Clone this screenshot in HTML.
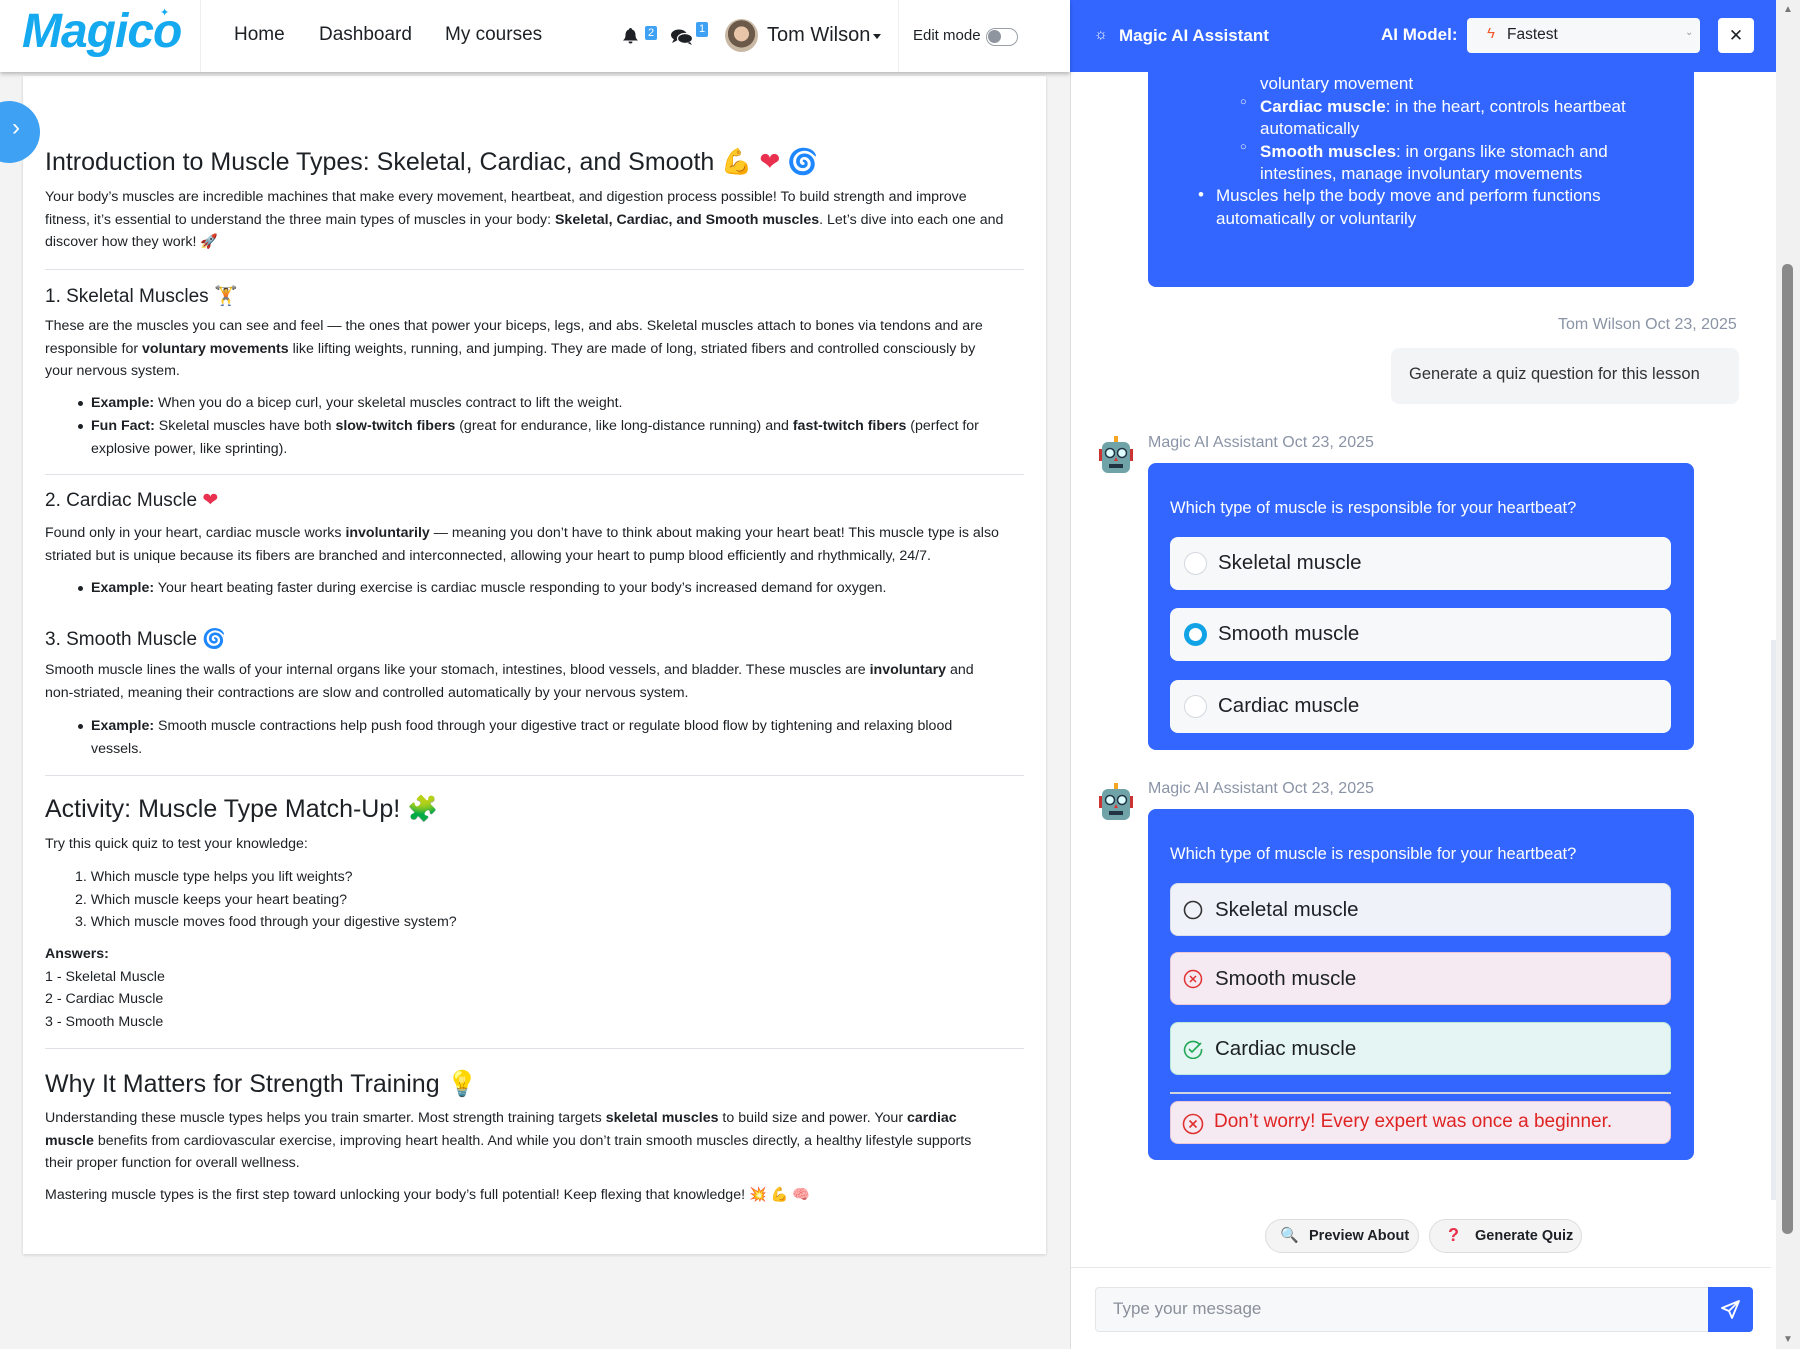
<!DOCTYPE html>
<html><head><meta charset="utf-8"><style>
*{box-sizing:border-box;margin:0;padding:0}
body{width:1800px;height:1349px;overflow:hidden;background:#f3f3f3;font-family:"Liberation Sans",sans-serif;position:relative;color:#1d2125}
.a{position:absolute;white-space:nowrap}
#hdr{position:absolute;left:0;top:0;width:1070px;height:72px;background:#fff;box-shadow:0 2px 4px rgba(0,0,0,.25);z-index:5}
.nav{position:absolute;top:24px;font-size:19px;color:#1d2125}
#card{position:absolute;left:23px;top:76px;width:1023px;height:1178px;background:#fff;box-shadow:0 1px 3px rgba(0,0,0,.15)}
.t{position:absolute;left:45px;font-size:14.2px;line-height:22.6px;color:#1d2125;white-space:nowrap}
.h2{position:absolute;left:45px;font-size:25px;color:#1d2125;white-space:nowrap}
.h3{position:absolute;left:45px;font-size:19px;color:#1d2125;white-space:nowrap}
.hr{position:absolute;left:45px;width:979px;height:1px;background:#dee2e6}
.li{position:absolute;left:91px;font-size:14.2px;line-height:22.6px;white-space:nowrap}
.li:before{content:"";position:absolute;left:-13px;top:9px;width:5px;height:5px;border-radius:50%;background:#1d2125}
.ol{position:absolute;left:75px;font-size:14.2px;line-height:22.6px;white-space:nowrap}
#rp{position:absolute;left:1070px;top:0;width:706px;height:1349px;background:#fff;border-left:1px solid #ddd}
#rh{position:absolute;left:1070px;top:0;width:706px;height:72px;background:#3366ff;z-index:4}
.bub{position:absolute;left:1148px;width:546px;background:#3366ff;border-radius:8px}
.wt{position:absolute;color:#fff;font-size:17px;white-space:nowrap}
.meta{position:absolute;font-size:16px;color:#8a94a6;white-space:nowrap}
.opt{position:absolute;left:1170px;width:501px;height:53px;background:#f7f8fa;border-radius:8px;font-size:20.5px;color:#1d2125}
.opt span{position:absolute;left:48px;top:14px}
.rad{position:absolute;left:14px;top:15px;width:23px;height:23px;border-radius:50%;border:1.5px solid #d4d7dd;background:#fff}
.robot{position:absolute;width:42px;height:42px}
.btn{position:absolute;top:1219px;height:34px;background:#f4f4f4;border:1px solid #ddd;border-radius:17px;font-size:14.5px;font-weight:bold;color:#1d2125}
</style></head><body>
<div id="hdr">
 <div class="a" style="left:22px;top:4px;font-size:48px;font-weight:bold;font-style:italic;color:#15a9f0;letter-spacing:-1px">Magico</div>
 <div class="a" style="left:160px;top:6px;font-size:11px;color:#15a9f0">✦</div>
 <div style="position:absolute;left:200px;top:0;width:1px;height:72px;background:#eee"></div>
 <div class="nav" style="left:234px">Home</div>
 <div class="nav" style="left:319px">Dashboard</div>
 <div class="nav" style="left:445px">My courses</div>
 <svg style="position:absolute;left:623px;top:28px" width="15" height="16" viewBox="0 0 15 16"><path d="M7.5 0c1 0 1.5.8 1.5 1.5 2.5.7 3.5 3 3.5 5.5 0 3 1 4 2.5 5.5H0C1.5 11 2.5 10 2.5 7c0-2.5 1-4.8 3.5-5.5C6 .8 6.5 0 7.5 0zM5.5 13.5h4a2 2 0 0 1-4 0z" fill="#1d2125"/></svg>
 <div class="a" style="left:645px;top:26px;width:12px;height:14px;background:#3ea1f3;color:#fff;font-size:11px;text-align:center;line-height:14px;border-radius:2px">2</div>
 <svg style="position:absolute;left:671px;top:29px" width="22" height="16" viewBox="0 0 22 16"><ellipse cx="8" cy="6" rx="8" ry="5.5" fill="#1d2125"/><path d="M3 10l-2 4 5-2.5z" fill="#1d2125"/><ellipse cx="14" cy="9.5" rx="7.5" ry="5" fill="#1d2125" stroke="#fff" stroke-width="1.2"/><path d="M19 13l2 3-4.5-2z" fill="#1d2125"/></svg>
 <div class="a" style="left:696px;top:22px;width:12px;height:15px;background:#3ea1f3;color:#fff;font-size:11px;text-align:center;line-height:15px;border-radius:2px">1</div>
 <div style="position:absolute;left:725px;top:19px;width:33px;height:33px;border-radius:50%;background:radial-gradient(circle at 50% 45%,#e8c4a8 0 30%,#6b5a4a 31% 55%,#c9b8a4 56%)"></div>
 <div class="a" style="left:767px;top:24px;font-size:20px">Tom Wilson</div>
 <div class="a" style="left:873px;top:34px;width:0;height:0;border-left:4px solid transparent;border-right:4px solid transparent;border-top:5px solid #1d2125"></div>
 <div style="position:absolute;left:898px;top:0;width:1px;height:72px;background:#eee"></div>
 <div class="a" style="left:913px;top:27px;font-size:15px">Edit mode</div>
 <div style="position:absolute;left:986px;top:28px;width:32px;height:18px;border-radius:9px;border:1.5px solid #9aa0a6;background:#fff"><div style="position:absolute;left:1px;top:1px;width:13px;height:13px;border-radius:50%;background:#8f959e"></div></div>
</div>
<div style="position:absolute;left:-22px;top:101px;width:62px;height:62px;border-radius:50%;background:#3ea1f3;z-index:6"></div>
<div class="a" style="left:12px;top:114px;color:#fff;font-size:24px;z-index:7">›</div>
<div id="card"></div>
<div class="h2" style="top:147px">Introduction to Muscle Types: Skeletal, Cardiac, and Smooth <span style="color:#f4a63a">💪</span> <span style="color:#e9304f">❤</span> <span style="color:#3b5cf0">🌀</span></div>
<div class="t" style="top:186px">Your body’s muscles are incredible machines that make every movement, heartbeat, and digestion process possible! To build strength and improve<br>fitness, it’s essential to understand the three main types of muscles in your body: <b>Skeletal, Cardiac, and Smooth muscles</b>. Let’s dive into each one and<br>discover how they work! 🚀</div>
<div class="hr" style="top:269px"></div>
<div class="h3" style="top:284px">1. Skeletal Muscles 🏋</div>
<div class="t" style="top:315px">These are the muscles you can see and feel — the ones that power your biceps, legs, and abs. Skeletal muscles attach to bones via tendons and are<br>responsible for <b>voluntary movements</b> like lifting weights, running, and jumping. They are made of long, striated fibers and controlled consciously by<br>your nervous system.</div>
<div class="li" style="top:392px"><b>Example:</b> When you do a bicep curl, your skeletal muscles contract to lift the weight.</div>
<div class="li" style="top:415px"><b>Fun Fact:</b> Skeletal muscles have both <b>slow-twitch fibers</b> (great for endurance, like long-distance running) and <b>fast-twitch fibers</b> (perfect for<br>explosive power, like sprinting).</div>
<div class="hr" style="top:474px"></div>
<div class="h3" style="top:489px">2. Cardiac Muscle <span style="color:#e9304f">❤</span></div>
<div class="t" style="top:522px">Found only in your heart, cardiac muscle works <b>involuntarily</b> — meaning you don’t have to think about making your heart beat! This muscle type is also<br>striated but is unique because its fibers are branched and interconnected, allowing your heart to pump blood efficiently and rhythmically, 24/7.</div>
<div class="li" style="top:577px"><b>Example:</b> Your heart beating faster during exercise is cardiac muscle responding to your body’s increased demand for oxygen.</div>
<div class="h3" style="top:627px">3. Smooth Muscle <span style="color:#3b5cf0">🌀</span></div>
<div class="t" style="top:659px">Smooth muscle lines the walls of your internal organs like your stomach, intestines, blood vessels, and bladder. These muscles are <b>involuntary</b> and<br>non-striated, meaning their contractions are slow and controlled automatically by your nervous system.</div>
<div class="li" style="top:715px"><b>Example:</b> Smooth muscle contractions help push food through your digestive tract or regulate blood flow by tightening and relaxing blood<br>vessels.</div>
<div class="hr" style="top:775px"></div>
<div class="h2" style="top:795px">Activity: Muscle Type Match-Up! <span style="color:#7cc35a">🧩</span></div>
<div class="t" style="top:833px">Try this quick quiz to test your knowledge:</div>
<div class="ol" style="top:866px">1. Which muscle type helps you lift weights?<br>2. Which muscle keeps your heart beating?<br>3. Which muscle moves food through your digestive system?</div>
<div class="t" style="top:943px"><b>Answers:</b><br>1 - Skeletal Muscle<br>2 - Cardiac Muscle<br>3 - Smooth Muscle</div>
<div class="hr" style="top:1048px"></div>
<div class="h2" style="top:1070px">Why It Matters for Strength Training <span style="color:#f5c431">💡</span></div>
<div class="t" style="top:1107px">Understanding these muscle types helps you train smarter. Most strength training targets <b>skeletal muscles</b> to build size and power. Your <b>cardiac</b><br><b>muscle</b> benefits from cardiovascular exercise, improving heart health. And while you don’t train smooth muscles directly, a healthy lifestyle supports<br>their proper function for overall wellness.</div>
<div class="t" style="top:1184px">Mastering muscle types is the first step toward unlocking your body’s full potential! Keep flexing that knowledge! 💥 💪 🧠</div>

<div id="rp"></div>
<div style="position:absolute;left:1776px;top:0;width:24px;height:1349px;background:#f1f1f1"></div>
<div style="position:absolute;left:1782px;top:264px;width:11px;height:970px;background:#8a8a8a;border-radius:5px"></div>
<div class="a" style="left:1783px;top:4px;font-size:10px;color:#777">▲</div>
<div class="a" style="left:1783px;top:1334px;font-size:10px;color:#777">▼</div>
<div style="position:absolute;left:1771px;top:640px;width:5px;height:560px;background:#e8ebf0"></div>

<div id="rh">
 <div class="a" style="left:24px;top:26px;font-size:15px;color:#fff">☼</div>
 <div class="a" style="left:49px;top:26px;font-size:17px;font-weight:bold;color:#fff">Magic AI Assistant</div>
 <div class="a" style="left:311px;top:25px;font-size:17px;font-weight:bold;color:#fff">AI Model:</div>
 <div style="position:absolute;left:397px;top:18px;width:233px;height:35px;background:#f7f8fa;border-radius:4px">
  <span class="a" style="left:20px;top:7px;font-size:15px;color:#f0582a">ϟ</span>
  <span class="a" style="left:40px;top:8px;font-size:15.5px;color:#1d2125">Fastest</span>
  <span class="a" style="left:218px;top:9px;font-size:10px;color:#999">⌄</span>
 </div>
 <div style="position:absolute;left:648px;top:18px;width:36px;height:35px;background:#fff;border-radius:4px;text-align:center;line-height:35px;font-size:17px;color:#1d2125">✕</div>
</div>

<div class="bub" style="top:40px;height:247px;border-radius:0 0 8px 8px"></div>
<div class="wt" style="left:1260px;top:73px;line-height:22.5px">voluntary movement<br><b>Cardiac muscle</b>: in the heart, controls heartbeat<br>automatically<br><b>Smooth muscles</b>: in organs like stomach and<br>intestines, manage involuntary movements</div>
<div class="wt" style="left:1240px;top:96px;font-size:11px">○</div>
<div class="wt" style="left:1240px;top:141px;font-size:11px">○</div>
<div class="wt" style="left:1198px;top:185px">•</div>
<div class="wt" style="left:1216px;top:185px;line-height:22.5px">Muscles help the body move and perform functions<br>automatically or voluntarily</div>

<div class="meta" style="left:1558px;top:316px">Tom Wilson Oct 23, 2025</div>
<div style="position:absolute;left:1391px;top:348px;width:348px;height:56px;background:#f3f4f6;border-radius:8px"></div>
<div class="a" style="left:1409px;top:365px;font-size:16.5px;color:#333">Generate a quiz question for this lesson</div>

<svg class="robot" style="left:1095px;top:433px" viewBox="0 0 42 42"><rect x="19" y="3" width="4" height="6" fill="#f5a623"/><rect x="4" y="16" width="4" height="12" fill="#c33"/><rect x="34" y="16" width="4" height="12" fill="#c33"/><rect x="7" y="9" width="28" height="31" rx="6" fill="#6fa3a8"/><circle cx="15" cy="20" r="4.5" fill="#dff" stroke="#234" stroke-width="1.5"/><circle cx="27" cy="20" r="4.5" fill="#dff" stroke="#234" stroke-width="1.5"/><path d="M21 24l-2 4h4z" fill="#d33"/><rect x="14" y="31" width="14" height="4" fill="#234"/></svg>
<div class="meta" style="left:1148px;top:434px">Magic AI Assistant Oct 23, 2025</div>
<div class="bub" style="top:463px;height:287px"></div>
<div class="wt" style="left:1170px;top:499px;font-size:16.5px">Which type of muscle is responsible for your heartbeat?</div>
<div class="opt" style="top:537px"><div class="rad"></div><span>Skeletal muscle</span></div>
<div class="opt" style="top:608px"><div class="rad" style="border:5px solid #12a3e6"></div><span>Smooth muscle</span></div>
<div class="opt" style="top:680px"><div class="rad"></div><span>Cardiac muscle</span></div>

<svg class="robot" style="left:1095px;top:780px" viewBox="0 0 42 42"><rect x="19" y="3" width="4" height="6" fill="#f5a623"/><rect x="4" y="16" width="4" height="12" fill="#c33"/><rect x="34" y="16" width="4" height="12" fill="#c33"/><rect x="7" y="9" width="28" height="31" rx="6" fill="#6fa3a8"/><circle cx="15" cy="20" r="4.5" fill="#dff" stroke="#234" stroke-width="1.5"/><circle cx="27" cy="20" r="4.5" fill="#dff" stroke="#234" stroke-width="1.5"/><path d="M21 24l-2 4h4z" fill="#d33"/><rect x="14" y="31" width="14" height="4" fill="#234"/></svg>
<div class="meta" style="left:1148px;top:780px">Magic AI Assistant Oct 23, 2025</div>
<div class="bub" style="top:809px;height:351px"></div>
<div class="wt" style="left:1170px;top:845px;font-size:16.5px">Which type of muscle is responsible for your heartbeat?</div>
<div class="opt" style="top:883px;background:#eff3f9;border:1px solid #d9dfe8"><svg style="position:absolute;left:12px;top:16px" width="20" height="20"><circle cx="10" cy="10" r="8.5" fill="none" stroke="#333" stroke-width="1.6"/></svg><span style="left:44px">Skeletal muscle</span></div>
<div class="opt" style="top:952px;background:#f5eaf1;border:1px solid #ecc8d6"><svg style="position:absolute;left:12px;top:16px" width="20" height="20"><circle cx="10" cy="10" r="8.5" fill="none" stroke="#e03131" stroke-width="1.5"/><path d="M7 7l6 6M13 7l-6 6" stroke="#e03131" stroke-width="1.5"/></svg><span style="left:44px">Smooth muscle</span></div>
<div class="opt" style="top:1022px;background:#e5f5f3;border:1px solid #b9ead9"><svg style="position:absolute;left:12px;top:16px" width="20" height="20"><path d="M17 6A8.5 8.5 0 1 0 18.5 10" fill="none" stroke="#22a855" stroke-width="1.6"/><path d="M6 10l3 3 9-9" fill="none" stroke="#22a855" stroke-width="1.6"/></svg><span style="left:44px">Cardiac muscle</span></div>
<div style="position:absolute;left:1170px;top:1092px;width:501px;height:2px;background:#d0d4dc"></div>
<div class="opt" style="top:1101px;height:43px;background:#f5eaf1;border:1px solid #ecc8d6"><svg style="position:absolute;left:11px;top:11px" width="22" height="22"><circle cx="11" cy="11" r="9.5" fill="none" stroke="#e03131" stroke-width="1.6"/><path d="M7.5 7.5l7 7M14.5 7.5l-7 7" stroke="#e03131" stroke-width="1.6"/></svg><span style="left:43px;top:9px;color:#e02424;font-size:19px">Don’t worry! Every expert was once a beginner.</span></div>

<div class="btn" style="left:1265px;width:154px"><span class="a" style="left:14px;top:6px;font-size:15px">🔍</span><span class="a" style="left:43px;top:8px">Preview About</span></div>
<div class="btn" style="left:1429px;width:153px"><span class="a" style="left:18px;top:5px;font-size:18px;color:#e8304a">?</span><span class="a" style="left:45px;top:8px">Generate Quiz</span></div>
<div style="position:absolute;left:1071px;top:1267px;width:700px;height:1px;background:#e5e7eb"></div>
<div style="position:absolute;left:1095px;top:1287px;width:614px;height:45px;background:#f7f8fa;border:1px solid #e3e5e8;border-radius:4px 0 0 4px"></div>
<div class="a" style="left:1113px;top:1299px;font-size:17px;color:#8a909a">Type your message</div>
<div style="position:absolute;left:1708px;top:1287px;width:45px;height:45px;background:#3366ff;border-radius:0 4px 4px 0"><svg style="position:absolute;left:13px;top:13px" width="19" height="19" viewBox="0 0 19 19"><path d="M18 1L1 8l7 3 3 7z M8 11L18 1" fill="none" stroke="#fff" stroke-width="1.8" stroke-linejoin="round"/></svg></div>
</body></html>
